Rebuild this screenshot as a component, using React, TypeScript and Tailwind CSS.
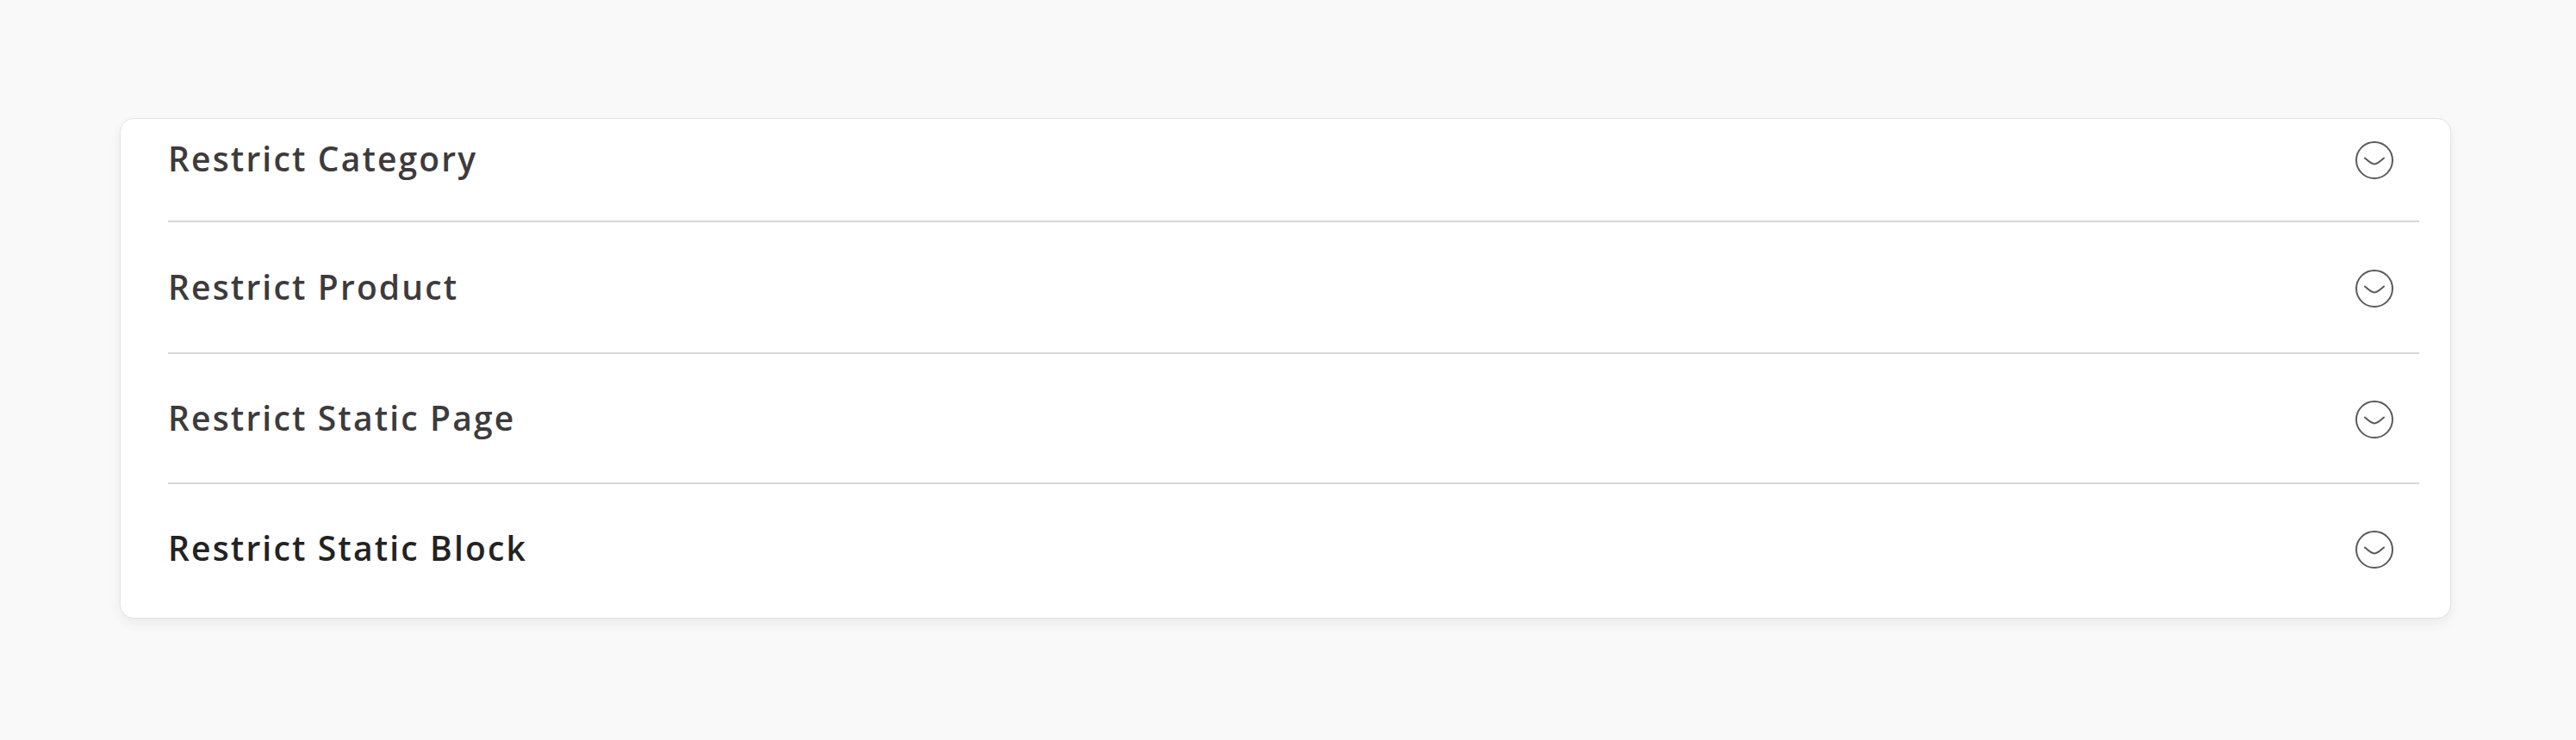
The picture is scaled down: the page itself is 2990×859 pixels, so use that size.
import React from "react";

const sections = [
  { title: "Restrict Category", rowClass: "h-[120px] pb-[26px]", dark: false },
  { title: "Restrict Product", rowClass: "h-[153px]", dark: false },
  { title: "Restrict Static Page", rowClass: "h-[151px]", dark: false },
  { title: "Restrict Static Block", rowClass: "h-[155px] pb-[6px]", dark: true },
];

function ChevronCircle() {
  return (
    <svg width="46" height="46" viewBox="0 0 46 46" fill="none">
      <circle cx="23" cy="23" r="21" stroke="#5a5a5a" strokeWidth="2" />
      <path
        d="M12 20.5 C16.5 24.5 19.5 27.5 23 27.5 C26.5 27.5 29.5 24.5 34 20.5"
        stroke="#5a5a5a"
        strokeWidth="2"
        strokeLinecap="round"
        fill="none"
      />
    </svg>
  );
}

export default function App() {
  return (
    <div className="min-h-screen bg-[#f9f9f9] pt-[137px] font-['Open_Sans',sans-serif]">
      <div className="ml-[139px] w-[2706px] bg-white rounded-[16px] border border-[#e3e3e3] shadow-[0_6px_14px_rgba(0,0,0,0.06)] pl-[55px] pr-[36px]">
        {sections.map((s, i) => (
          <div
            key={s.title}
            className={`flex items-center justify-between ${s.rowClass} ${
              i < sections.length - 1 ? "border-b-2 border-[#d7d7d7]" : ""
            }`}
          >
            <span
              className={`text-[39px] font-semibold tracking-[2.15px] ${
                s.dark ? "text-[#232323]" : "text-[#3d3b3c]"
              }`}
            >
              {s.title}
            </span>
            <div className="mr-[29px] mt-[3px] flex items-center">
              <ChevronCircle />
            </div>
          </div>
        ))}
      </div>
    </div>
  );
}
